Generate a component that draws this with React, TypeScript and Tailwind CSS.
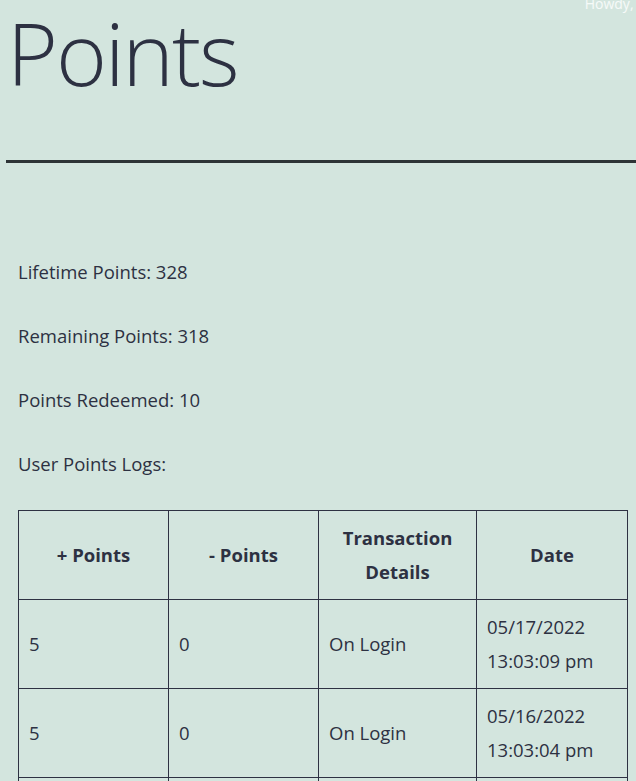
const rows = [
  { plus: "5", minus: "0", details: "On Login", date: "05/17/2022", time: "13:03:09 pm" },
  { plus: "5", minus: "0", details: "On Login", date: "05/16/2022", time: "13:03:04 pm" },
  { plus: "5", minus: "0", details: "On Login", date: "05/15/2022", time: "13:02:58 pm" },
];

const stats = [
  "Lifetime Points: 328",
  "Remaining Points: 318",
  "Points Redeemed: 10",
  "User Points Logs:",
];

export default function App() {
  return (
    <div
      className="relative min-h-[781px] overflow-hidden bg-[#d3e5de] text-[#2d3142]"
      style={{ fontFamily: '"Open Sans", "Noto Sans", sans-serif' }}
    >
      <div className="absolute right-[-10px] top-[-7px] text-[14px] text-white/80">Howdy, A</div>

      <div className="pl-[6px]">
        <h1 className="ml-[1px] h-[160px] text-[87px] font-light leading-[104px] tracking-[-2px] text-[#2d3142]">
          Points
        </h1>
        <div className="h-[3px] w-[640px] bg-[#2d3436]" />
      </div>

      <div className="px-[18px] pt-[95px]">
        <div className="flex flex-col gap-[37px] text-[18.5px] leading-[27px]">
          {stats.map((s) => (
            <p key={s}>{s}</p>
          ))}
        </div>

        <table className="mt-[33px] w-[610px] border-collapse text-[18.5px] leading-[34px]">
          <thead>
            <tr>
              <th className="w-[150px] border border-[#2d3142] px-[10px] py-[10px] font-bold">+ Points</th>
              <th className="w-[150px] border border-[#2d3142] px-[10px] py-[10px] font-bold">- Points</th>
              <th className="w-[158px] border border-[#2d3142] px-[10px] py-[10px] font-bold">
                Transaction Details
              </th>
              <th className="border border-[#2d3142] px-[10px] py-[10px] font-bold">Date</th>
            </tr>
          </thead>
          <tbody>
            {rows.map((r, i) => (
              <tr key={i}>
                <td className="border border-[#2d3142] px-[10px] py-[10px]">{r.plus}</td>
                <td className="border border-[#2d3142] px-[10px] py-[10px]">{r.minus}</td>
                <td className="border border-[#2d3142] px-[10px] py-[10px]">{r.details}</td>
                <td className="border border-[#2d3142] px-[10px] py-[10px]">
                  {r.date}
                  <br />
                  {r.time}
                </td>
              </tr>
            ))}
          </tbody>
        </table>
      </div>
    </div>
  );
}
